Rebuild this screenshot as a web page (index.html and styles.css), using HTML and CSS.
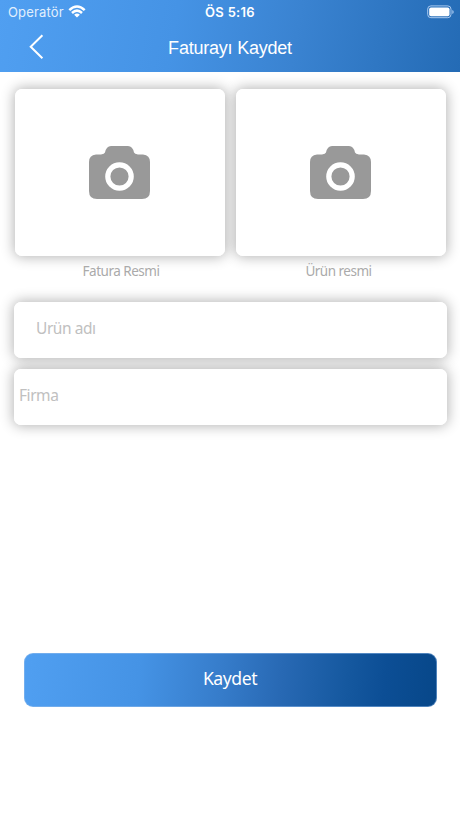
FILE: index.html
```html
<!DOCTYPE html>
<html lang="tr">
<head>
<meta charset="utf-8">
<title>Faturayı Kaydet</title>
<link rel="stylesheet" href="styles.css">
</head>
<body>
<header class="header">
  <div class="status">
    <div class="carrier"><span class="carrier-name">Operatör</span>
      <svg class="wifi" viewBox="0 0 18 13" width="18" height="13"><g fill="none" stroke="#fff" stroke-width="2.5"><path d="M1.3 5.1Q9-2.2 16.7 5.1"/><path d="M4 8Q9 3.2 14 8"/></g><path d="M9 12.6 6.1 9.8Q9 7.2 11.9 9.8Z" fill="#fff"/></svg>
    </div>
    <div class="clock"><span>ÖS 5:16</span></div>
    <div class="power"><svg width="28" height="14" viewBox="0 0 28 14"><rect x=".7" y=".9" width="23.3" height="11.8" rx="3.2" fill="none" stroke="#a9c9ef"/><rect x="2.2" y="2.4" width="20.3" height="8.8" rx="1.8" fill="#fff"/><path d="M25.3 5v4Q26.7 8.4 26.7 7T25.3 5Z" fill="#a9c9ef"/></svg></div>
  </div>
  <nav class="navbar">
    <button class="back" aria-label="Geri"><svg width="16" height="26" viewBox="0 0 16 26"><path d="M13.4 1.2 1.7 12.7 13.4 24.3" fill="none" stroke="#fff" stroke-width="2"/></svg></button>
    <h1 class="title"><span>Faturayı Kaydet</span></h1>
  </nav>
</header>
<main class="form">
  <section class="photos">
    <figure class="photo">
      <div class="surface photo-box"><svg class="camera" width="61" height="53" viewBox="0 0 61 53"><path d="M7 8.4H12Q15.4 8.4 16 6.6Q17.3 0 22 0H39Q43.7 0 45 6.6Q45.6 8.4 49 8.4H54Q61 8.9 61 16V45Q61 53 53 53H8Q0 53 0 45V16Q0 8.9 7 8.4Z" fill="#999"/><circle cx="30.5" cy="30.5" r="11.7" fill="none" stroke="#fff" stroke-width="5.2"/></svg></div>
      <figcaption class="caption"><span>Fatura Resmi</span></figcaption>
    </figure>
    <figure class="photo">
      <div class="surface photo-box"><svg class="camera" width="61" height="53" viewBox="0 0 61 53"><path d="M7 8.4H12Q15.4 8.4 16 6.6Q17.3 0 22 0H39Q43.7 0 45 6.6Q45.6 8.4 49 8.4H54Q61 8.9 61 16V45Q61 53 53 53H8Q0 53 0 45V16Q0 8.9 7 8.4Z" fill="#999"/><circle cx="30.5" cy="30.5" r="11.7" fill="none" stroke="#fff" stroke-width="5.2"/></svg></div>
      <figcaption class="caption caption-product"><span>Ürün resmi</span></figcaption>
    </figure>
  </section>
  <section class="fields">
    <div class="surface field field-product"><span>Urün adı</span></div>
    <div class="surface field field-company"><span>Firma</span></div>
  </section>
  <button class="save"><span>Kaydet</span></button>
</main>
</body>
</html>
```
FILE: styles.css
```css
* { box-sizing: border-box; }
body { margin: 0; height: 818px; background: #fff; font-family: "Noto Sans", sans-serif; overflow: hidden; display: flex; flex-direction: column; }
button { border: 0; padding: 0; background: none; font: inherit; }
.header { height: 71.5px; flex: none; color: #fff; background: linear-gradient(100deg, #509ff1 0%, #4593e5 38%, #3a83d1 64%, #246bb5 100%); }
.status { height: 24px; display: grid; grid-template-columns: 1fr auto 1fr; align-items: center; padding: 0 5px 0 8px; font-family: Inter, sans-serif; font-size: 13px; line-height: 24px; }
.carrier { display: flex; align-items: center; gap: 4px; }
.carrier-name { letter-spacing: .16px; color: #e1effd; }
.wifi { margin-top: -2px; }
.clock { font-weight: 600; letter-spacing: .28px; margin-right: 3px; }
.power { display: flex; justify-content: flex-end; }
.navbar { height: 46px; display: grid; grid-template-columns: 60px 1fr 60px; align-items: center; }
.back { height: 26px; padding-left: 29px; display: flex; }
.title { margin: 0; padding-top: 1px; text-align: center; font: 400 18px/24px "Liberation Sans", sans-serif; letter-spacing: -.22px; }
.form { flex: 1; display: flex; flex-direction: column; padding: 17.5px 13.5px 111px; isolation: isolate; }
.surface { position: relative; background: #fff; border-radius: 7px; }
.surface::before { content: ""; position: absolute; inset: 0; z-index: -1; border-radius: inherit; box-shadow: 0 0 13px 1px rgba(0, 0, 0, .3); }
.photos { display: grid; grid-template-columns: 1fr 1fr; gap: 11px; padding: 0 1px; }
.photo { margin: 0; }
.photo-box { height: 167px; display: flex; align-items: center; justify-content: center; }
.caption { height: 32px; line-height: 31px; padding-left: 3px; text-align: center; font-size: 13.5px; color: #aaa; letter-spacing: -.5px; }
.caption-product { padding: 0 4px 0 0; }
.fields { display: grid; gap: 11px; margin-top: 14px; }
.field { height: 56px; padding-bottom: 5px; display: flex; align-items: center; font-size: 15.5px; letter-spacing: -.45px; color: #c0c0c0; }
.field-product { padding-left: 22.5px; }
.field-company { padding-left: 5.5px; }
.save { height: 54px; margin: auto 10px 0; padding-bottom: 4px; border: 1px solid rgba(150, 190, 235, .5); border-radius: 9px; color: #fff; font-size: 17.6px; letter-spacing: -.45px; line-height: 24px; background: linear-gradient(95deg, #509ff1, #4593e5 28%, #367cca 48%, #2869b4 62%, #15589f 78%, #0c4e95 87%, #074789) border-box; }
```
